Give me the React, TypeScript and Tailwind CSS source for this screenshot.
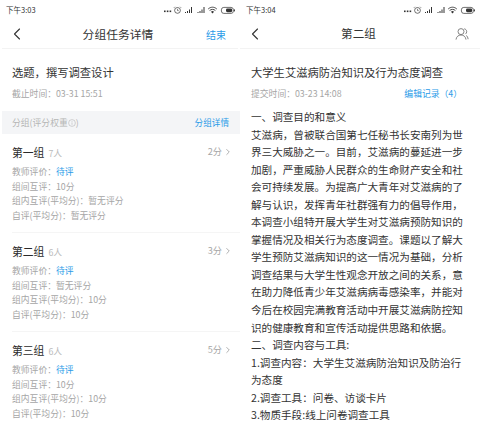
import { ChevronLeft, ChevronRight } from "lucide-react";

const font = "font-['Noto_Sans_CJK_SC','Noto_Sans',sans-serif]";

const StatusBar = ({ time }: { time: string }) => (
  <div className="h-5 flex items-center justify-between pl-[6px] pr-[2px]">
    <span className="text-[7.5px] text-[#333]">{time}</span>
    <svg width="74" height="10" viewBox="0 0 74 10" fill="none" className="text-[#333]">
      {/* dots */}
      <rect x="0" y="5.5" width="1.6" height="1.6" fill="currentColor" />
      <rect x="2.8" y="5.5" width="1.6" height="1.6" fill="currentColor" />
      <rect x="5.6" y="5.5" width="1.6" height="1.6" fill="currentColor" />
      {/* alarm */}
      <circle cx="13.5" cy="5.4" r="2.9" stroke="currentColor" strokeWidth="0.7" />
      <path d="M13.5 3.8v1.8h1.2M10.9 1.8l-1 1M16.1 1.8l1 1" stroke="currentColor" strokeWidth="0.6" />
      {/* signal */}
      <path d="M21 7h1v1h-1zM23 6h1v2h-1zM25 4.5h1V8h-1zM27 2h1v6h-1z" fill="currentColor" />
      <path d="M33.500 7h1v1h-1zM35.500 6h1v2h-1zM37.500 4.500h1V8h-1zM39.500 2h1v6h-1z" fill="currentColor" />
      {/* wifi */}
      <path d="M44.200 4c2.600-2.400 6-2.400 8.600 0M45.600 5.500c1.800-1.500 4-1.500 5.800 0" stroke="currentColor" strokeWidth="0.9" />
      <path d="M47 6.700c1-.8 2-.8 3 0l-1.500 1.700z" fill="currentColor" />
      {/* battery */}
      <rect x="57.400" y="2.400" width="12" height="6" rx="2.400" stroke="currentColor" strokeWidth="0.7" />
      <rect x="62" y="3.600" width="6.200" height="3.600" rx="1.400" fill="currentColor" />
      <rect x="70" y="4.400" width="0.9" height="2" fill="currentColor" />
    </svg>
  </div>
);

const groups = [
  {
    name: "第一组",
    count: "7人",
    score: "2分",
    rows: ["组间互评：10分", "组内互评(平均分)：暂无评分", "自评(平均分)：暂无评分"],
  },
  {
    name: "第二组",
    count: "6人",
    score: "3分",
    rows: ["组间互评：暂无评分", "组内互评(平均分)：10分", "自评(平均分)：10分"],
  },
  {
    name: "第三组",
    count: "6人",
    score: "5分",
    rows: ["组间互评：10分", "组内互评(平均分)：10分", "自评(平均分)：10分"],
  },
];

const bodyLines = [
  "一、调查目的和意义",
  "艾滋病，曾被联合国第七任秘书长安南列为世",
  "界三大威胁之一。目前，艾滋病的蔓延进一步",
  "加剧，严重威胁人民群众的生命财产安全和社",
  "会可持续发展。为提高广大青年对艾滋病的了",
  "解与认识，发挥青年社群强有力的倡导作用，",
  "本调查小组特开展大学生对艾滋病预防知识的",
  "掌握情况及相关行为态度调查。课题以了解大",
  "学生预防艾滋病知识的这一情况为基础，分析",
  "调查结果与大学生性观念开放之间的关系，意",
  "在助力降低青少年艾滋病病毒感染率，并能对",
  "今后在校园完满教育活动中开展艾滋病防控知",
  "识的健康教育和宣传活动提供思路和依据。",
  "二、调查内容与工具:",
  "1.调查内容：大学生艾滋病防治知识及防治行",
  "为态度",
  "2.调查工具：问卷、访谈卡片",
  "3.物质手段:线上问卷调查工具",
];

export default function App() {
  return (
    <div className={`${font} w-[480px] h-[424px] overflow-hidden bg-white flex`}>
      {/* left phone */}
      <div className="w-[240px] shrink-0">
        <StatusBar time="下午3:03" />
        <div className="h-[29px] mx-[2px] border-b border-[#f3f3f3] flex items-center justify-between pl-[5px] pr-[12px]">
          <ChevronLeft className="w-[20px] h-[20px] text-[#333]" strokeWidth={1.3} />
          <span className="text-[11.8px] text-[#333] ml-[3px]">分组任务详情</span>
          <span className="text-[10px] text-[#2a9be8]">结束</span>
        </div>
        <div className="pl-3 pt-[15px] h-[62px]">
          <div className="text-[11.3px] leading-[16px] text-[#333]">选题，撰写调查设计</div>
          <div className="text-[8.8px] leading-[12px] mt-[8px] text-[#a6a6a6]">截止时间：03-31 15:51</div>
        </div>
        <div className="ml-[2px] h-[23px] bg-[#f4f5f7] flex items-center justify-between pl-[10px] pr-[11px]">
          <span className="text-[8.8px] text-[#b5b5b5] flex items-center">
            分组(评分权重
            <svg width="8" height="8" viewBox="0 0 8 8" fill="none" stroke="#b5b5b5" strokeWidth="0.6">
              <circle cx="4" cy="4" r="3.4" />
              <path d="M4 3.400v2.400M4 2v.8" />
            </svg>
            )
          </span>
          <span className="text-[8.6px] text-[#2a9be8]">分组详情</span>
        </div>
        {groups.map((g, i) => (
          <div key={g.name} className="ml-3 h-[99px] pt-[10px] border-b border-[#f5f5f5]">
            <div className="flex items-center justify-between h-[16px] pr-[9px]">
              <div className="flex items-baseline gap-[4px]">
                <span className="text-[10.8px] text-[#2a2a2a]">{g.name}</span>
                <span className="text-[8.8px] text-[#bbb]">{g.count}</span>
              </div>
              <div className="flex items-center text-[9.2px] text-[#a6a6a6] gap-[1px]">
                {g.score}
                <ChevronRight className="w-[10px] h-[10px] -mr-[2px] text-[#777]" strokeWidth={1.4} />
              </div>
            </div>
            <div className="mt-[5px] text-[8.8px] leading-[14.5px] text-[#a6a6a6]">
              <div>
                教师评价：<span className="text-[#2a9be8]">待评</span>
              </div>
              {g.rows.map((r) => (
                <div key={r + i}>{r}</div>
              ))}
            </div>
          </div>
        ))}
      </div>

      {/* right phone */}
      <div className="w-[240px] shrink-0">
        <StatusBar time="下午3:04" />
        <div className="h-[29px] border-b border-[#f3f3f3] flex items-center justify-between pl-[5px] pr-[11px]">
          <ChevronLeft className="w-[20px] h-[20px] text-[#333]" strokeWidth={1.3} />
          <span className="text-[11.6px] text-[#333] mr-[3px]">第二组</span>
          <svg width="14" height="14" viewBox="0 0 14 14" fill="none" stroke="#666" strokeWidth="0.8">
            <circle cx="6" cy="4.600" r="3" />
            <path d="M1 12.600c.4-3 2.400-4.600 5-4.600s4.600 1.600 5 4.600" />
            <path d="M9.200 1.800c1.600.3 2.500 1.500 2.500 2.900 0 1-.5 1.900-1.300 2.400M11.200 8.400c1 .7 1.700 2 1.900 3.800" />
          </svg>
        </div>
        <div className="pl-[11px] pt-[15px]">
          <div className="text-[11.3px] leading-[16px] text-[#333] whitespace-nowrap">
            大学生艾滋病防治知识及行为态度调查
          </div>
          <div className="flex justify-between pr-[18px] mt-[8px] text-[8.8px] leading-[12px] text-[#a6a6a6]">
            <span>提交时间：03-23 14:08</span>
            <span className="text-[#2a9be8]">编辑记录（4）</span>
          </div>
          <div className="mt-[8px] text-[10.6px] leading-[17.55px] text-[#333] whitespace-nowrap">
            {bodyLines.map((l) => (
              <div key={l}>{l}</div>
            ))}
          </div>
        </div>
      </div>
    </div>
  );
}
